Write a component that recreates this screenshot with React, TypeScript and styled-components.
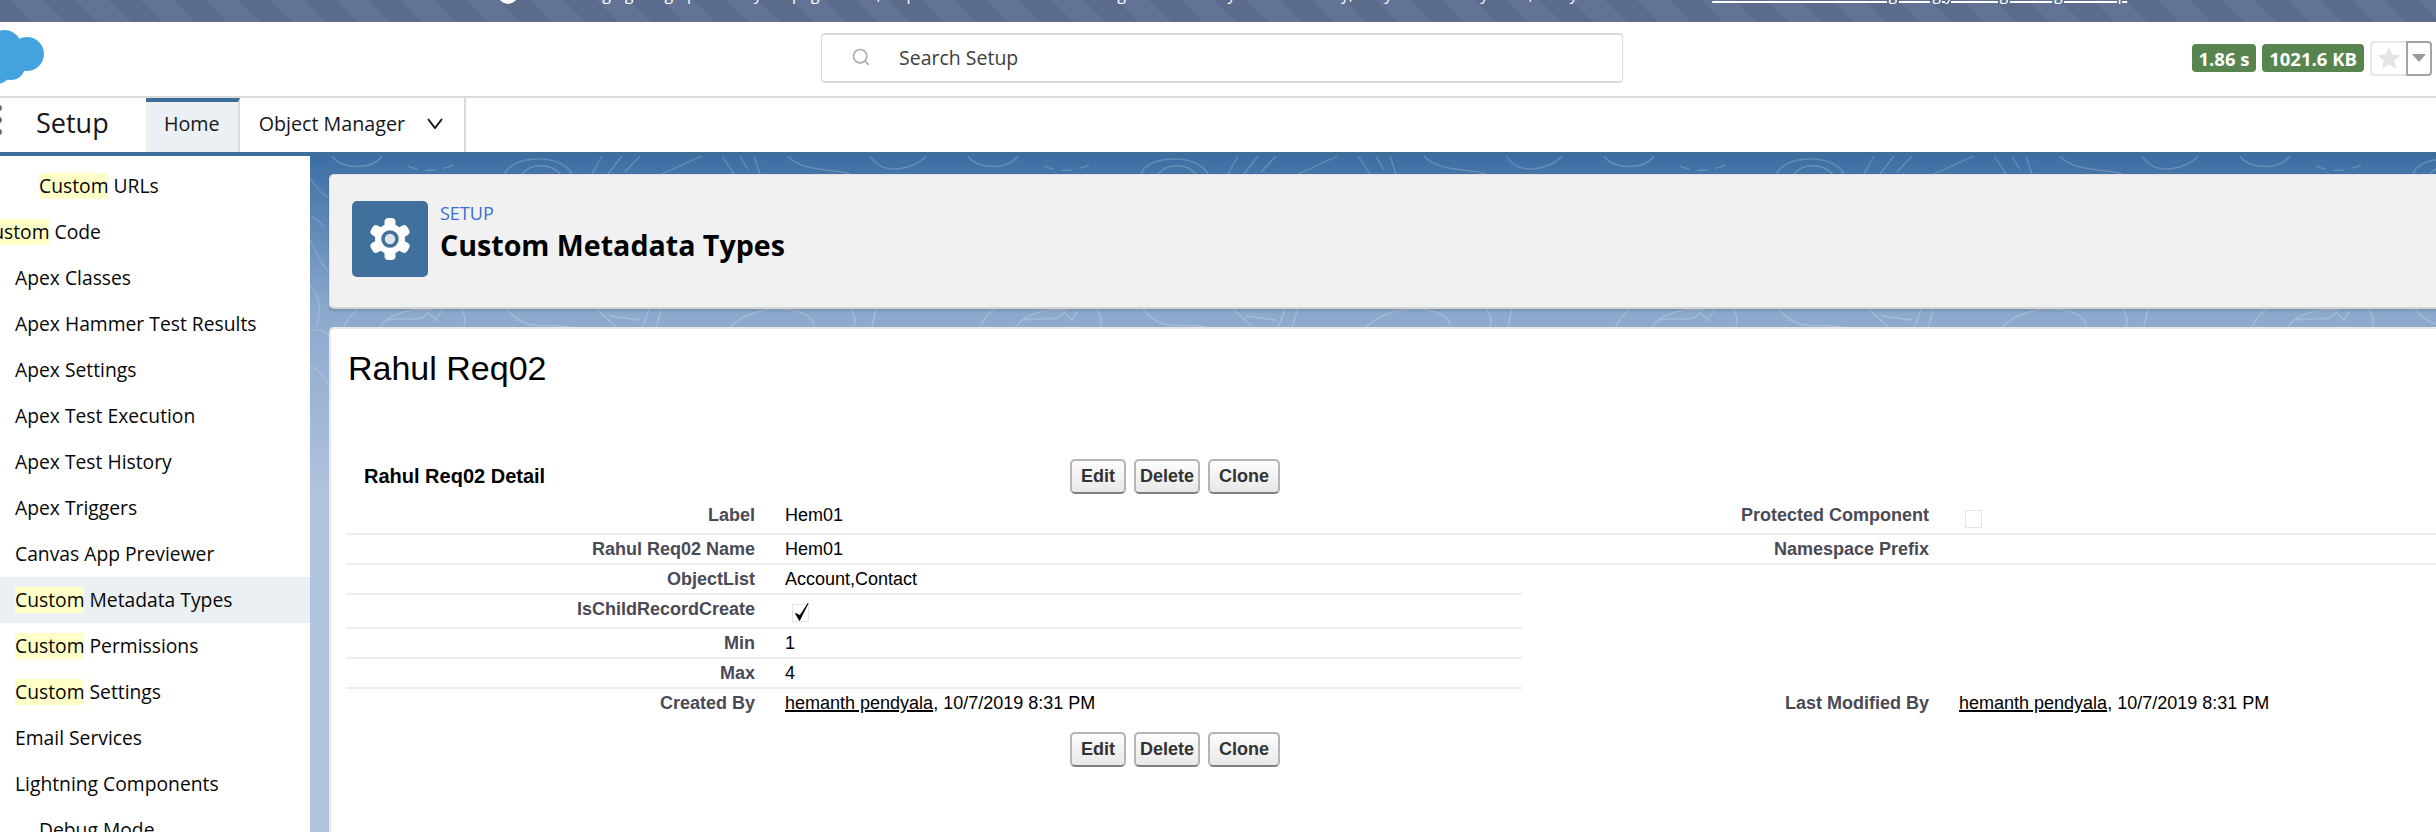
import React from "react";
import styled, { createGlobalStyle } from "styled-components";
import { Search } from "lucide-react";

const sansStack = `"Open Sans", "Liberation Sans", sans-serif`;
const arialStack = `"Liberation Sans", Arial, sans-serif`;

const GlobalStyle = createGlobalStyle`
  html, body {
    margin: 0;
    padding: 0;
    background: #fff;
    overflow: hidden;
  }
  * {
    box-sizing: border-box;
  }
`;

const Page = styled.div`
  width: 2436px;
  height: 832px;
  overflow: hidden;
  display: flex;
  flex-direction: column;
  font-family: ${sansStack};
  color: #080707;
`;

const Banner = styled.div`
  height: 22px;
  flex: none;
  overflow: hidden;
  display: flex;
  align-items: flex-end;
  padding: 0 0 17px 498px;
  background: repeating-linear-gradient(45deg, #5a6b8c 0, #5a6b8c 23px, #627395 23px, #627395 46px);
  color: #fff;
  font-size: 16px;
  line-height: 22px;
  white-space: nowrap;
`;

const BannerDot = styled.span`
  width: 20px;
  height: 20px;
  margin: 0 7px 1px 0;
  border-radius: 50%;
  background: #fff;
  flex: none;
`;

const BannerLink = styled.a`
  margin-left: 102px;
  color: #fff;
  text-decoration: underline;
  text-decoration-thickness: 2px;
`;

const Header = styled.header`
  height: 76px;
  flex: none;
  display: flex;
  align-items: center;
  border-bottom: 2px solid #dddbda;
  background: #fff;
`;

const LogoSlot = styled.div`
  width: 821px;
  height: 74px;
  flex: none;
`;

const SearchBox = styled.div`
  width: 802px;
  height: 50px;
  margin-top: -2px;
  display: flex;
  align-items: center;
  gap: 28px;
  padding-left: 29px;
  padding-bottom: 2px;
  border: 1px solid #dddbda;
  border-top-width: 2px;
  border-bottom-width: 2px;
  border-radius: 4px;
  font-size: 19.5px;
  color: #3e3e3c;
`;

const Limits = styled.div`
  margin-left: auto;
  margin-right: 4px;
  margin-top: -2px;
  display: flex;
  align-items: center;
`;

const Badge = styled.span`
  height: 28px;
  display: flex;
  align-items: center;
  justify-content: center;
  width: ${(p) => p.$width}px;
  margin-right: 6px;
  border-radius: 4px;
  background: #58854f;
  color: #fff;
  font-size: 18.5px;
  font-weight: 700;
`;

const FavButton = styled.div`
  width: 36px;
  height: 35px;
  display: flex;
  align-items: center;
  justify-content: center;
  border: 2px solid #e6e6e6;
  border-right: 0;
  border-radius: 4px 0 0 4px;
`;

const FavMenu = styled.div`
  width: 26px;
  height: 35px;
  display: flex;
  align-items: center;
  justify-content: center;
  border: 2px solid #a3a3a3;
  border-radius: 0 4px 4px 0;
`;

const Caret = styled.span`
  width: 0;
  height: 0;
  border-left: 7px solid transparent;
  border-right: 7px solid transparent;
  border-top: 8px solid #999;
`;

const Nav = styled.nav`
  height: 58px;
  flex: none;
  display: flex;
  background: #fff;
  border-bottom: 4px solid #3e6f9b;
`;

const AppName = styled.div`
  width: 146px;
  flex: none;
  display: flex;
  align-items: center;
  gap: 31px;
  padding-bottom: 6px;
  font-size: 27px;
  color: #16161a;
`;

const LauncherDots = styled.svg`
  width: 5px;
  height: 40px;
  flex: none;
`;

const Tab = styled.div`
  display: flex;
  align-items: center;
  gap: 22px;
  padding: ${(p) => (p.$active ? "0 18px 8px" : "0 21px 4px 19px")};
  border-right: 2px solid #dddbda;
  border-top: ${(p) => (p.$active ? "4px solid #3e6f9b" : "0")};
  background: ${(p) => (p.$active ? "#ebf0f5" : "#fff")};
  font-size: 19.7px;
  color: #16161a;
`;

const Main = styled.main`
  flex: 1;
  min-height: 0;
  display: flex;
`;

const Sidebar = styled.aside`
  width: 310px;
  flex: none;
  padding-top: 7px;
  overflow: hidden;
  background: #fff;
`;

const SideItem = styled.div`
  height: 46px;
  display: flex;
  align-items: center;
  padding-bottom: 2px;
  background: ${(p) => (p.$active ? "#ebf0f5" : "transparent")};
  font-size: 19.3px;
  color: #080707;
  white-space: nowrap;
`;

const SideLabel = styled.span`
  margin-left: ${(p) => p.$indent}px;
`;

const Mark = styled.mark`
  display: inline-block;
  background: #ffffc8;
  color: inherit;
  line-height: 26px;
  margin-right: 5px;
`;

const Content = styled.div`
  position: relative;
  flex: 1;
  min-width: 0;
  overflow: hidden;
  padding: 18px 0 0 19px;
  background: linear-gradient(to bottom, #3c6ea4 0, #8aa8cc 150px, #b0c3de 340px, #b0c3de 100%);
`;

const Topography = styled.svg`
  position: absolute;
  left: 0;
  top: 0;
  width: 100%;
  height: 100%;
`;

const PageHeaderCard = styled.section`
  position: relative;
  width: 2140px;
  height: 135px;
  display: flex;
  align-items: center;
  gap: 12px;
  padding: 0 0 5px 22px;
  background: #f1f1f1;
  border: 1px solid #e2e2e2;
  border-bottom: 2px solid #d4d4d2;
  border-radius: 5px 0 0 5px;
  box-shadow: 0 2px 3px rgba(0, 0, 0, 0.15);
`;

const HeaderIcon = styled.div`
  width: 76px;
  height: 76px;
  flex: none;
  display: flex;
  align-items: center;
  justify-content: center;
  background: #3f719c;
  border-radius: 5px;
`;

const HeaderText = styled.div`
  display: flex;
  flex-direction: column;
  margin-top: -11px;
`;

const Crumb = styled.div`
  font-size: 18px;
  line-height: 23px;
  color: #3a6fd0;
`;

const PageTitle = styled.h1`
  margin: 0;
  font-size: 28.6px;
  line-height: 40px;
  font-weight: 700;
  color: #000;
`;

const BodyCard = styled.section`
  position: relative;
  width: 2140px;
  height: 520px;
  margin-top: 18px;
  padding: 20px 0 0 15px;
  background: #fff;
  border: 2px solid #e8e8e8;
  border-right: 0;
  border-bottom: 0;
  border-radius: 5px 0 0 0;
  font-family: ${arialStack};
`;

const RecordName = styled.h2`
  margin: 0 0 72px 2px;
  font-size: 34px;
  line-height: 38px;
  font-weight: 400;
  color: #000;
`;

const DetailHead = styled.div`
  height: 35px;
  display: flex;
  align-items: center;
  margin-bottom: 7px;
`;

const DetailTitle = styled.h3`
  width: 724px;
  margin: 0;
  padding-left: 18px;
  padding-bottom: 2px;
  font-size: 20px;
  line-height: 24px;
  font-weight: 700;
  color: #000;
`;

const ButtonRow = styled.div`
  display: flex;
  gap: 8px;
`;

const BottomButtons = styled(ButtonRow)`
  margin: 15px 0 0 724px;
`;

const Button = styled.button`
  height: 35px;
  width: ${(p) => p.$width}px;
  padding: 0;
  border: 2px solid #b5b5b5;
  border-bottom-color: #7f7f7f;
  border-radius: 5px;
  background: linear-gradient(to bottom, #fdfdfd, #e8e8e8);
  font-family: ${arialStack};
  font-size: 18px;
  font-weight: 700;
  color: #333;
`;

const Row = styled.div`
  display: flex;
`;

const Pair = styled.div`
  display: grid;
  grid-template-columns: ${(p) => (p.$right ? "407px 1fr" : "409px 1fr")};
  column-gap: 30px;
  flex: ${(p) => (p.$right ? "1" : "none")};
  width: ${(p) => (p.$right ? "auto" : "1176px")};
  padding: ${(p) => (p.$tall ? "4px 0 8px" : "4px 0 4px")};
  border-bottom: ${(p) => (p.$line ? "2px solid #eeeeee" : "0")};
  min-height: ${(p) => (p.$line ? (p.$tall ? 34 : 30) : 28)}px;
  font-size: 18px;
  line-height: 20px;
`;

const Label = styled.div`
  text-align: right;
  font-weight: 700;
  color: #4a4a56;
`;

const Value = styled.div`
  color: #000;
`;

const UserLink = styled.a`
  color: #000;
  text-decoration: underline;
  text-decoration-thickness: 2px;
`;

const CheckImage = styled.svg`
  display: block;
  width: 18px;
  height: 20px;
  margin: 4px 0 -6px ${(p) => p.$offset}px;
`;

const GearIcon = () => (
  <svg width="42" height="44" viewBox="-21 -22 42 44">
    <circle r="15" fill="#fff" />
    {[0, 60, 120, 180, 240, 300].map((deg) => (
      <rect key={deg} x="-5.5" y="-21" width="11" height="12" rx="4" fill="#fff" transform={`rotate(${deg})`} />
    ))}
    <circle r="7" fill="#dbe5ee" stroke="#3f719c" strokeWidth="3.5" />
  </svg>
);

const CloudLogo = () => (
  <svg width="46" height="64" viewBox="0 0 46 64" fill="#44a2df">
    <circle cx="4" cy="26" r="18" />
    <circle cx="27" cy="32" r="17" />
    <circle cx="11" cy="44" r="14" />
    <circle cx="-3" cy="48" r="14" />
  </svg>
);

const StarIcon = () => (
  <svg width="24" height="24" viewBox="0 0 24 24" fill="#e4e4e4">
    <path d="M12 1 L15.2 8.6 L23.4 9.3 L17.2 14.6 L19.1 22.7 L12 18.4 L4.9 22.7 L6.8 14.6 L0.6 9.3 L8.8 8.6 Z" />
  </svg>
);

const TabChevron = () => (
  <svg width="16" height="11" viewBox="0 0 16 11" fill="none" stroke="#16161a" strokeWidth="2">
    <path d="M1 1 L8 10 L15 1" />
  </svg>
);

const CheckBox = ({ checked, offset }: { checked?: boolean; offset: number }) => (
  <CheckImage $offset={offset} viewBox="0 0 18 20">
    <rect x="0.5" y="1.5" width="16" height="17" fill="none" stroke="#c9c9c9" strokeDasharray="1 1" />
    {checked && <path d="M3.5 10.5 L7.5 17.5 L16 0.5 L8 12.5 Z" fill="#000" stroke="#000" strokeWidth="0.9" />}
  </CheckImage>
);

// the contour lines only show in the gaps between the cards
const Contours = () => (
  <Topography>
    <defs>
      <pattern id="topStrip" width="636" height="18" patternUnits="userSpaceOnUse">
        <g fill="none" stroke="#fff" strokeOpacity="0.2" strokeWidth="1.3">
          <path d="M22 0 C32 14 62 14 72 0" />
          <path d="M98 10 C115 18 135 14 150 6" strokeDasharray="10 8" />
          <path d="M195 18 C200 0 250 -4 262 18" />
          <path d="M212 18 C220 8 240 6 250 18" />
          <path d="M282 18 L292 0 M298 18 L312 0 M315 16 L330 0" />
          <path d="M352 18 C366 12 378 6 392 0" />
          <path d="M412 0 L424 18 M430 0 L438 14 M444 0 L450 18" />
          <path d="M478 0 C492 16 520 12 540 18" />
          <path d="M560 0 C574 22 606 12 616 0" />
        </g>
      </pattern>
      <pattern id="midStrip" y="152" width="636" height="19" patternUnits="userSpaceOnUse">
        <g fill="none" stroke="#fff" strokeOpacity="0.22" strokeWidth="1.3">
          <path d="M34 19 C38 10 44 4 50 0" />
          <path d="M70 19 C80 4 104 0 122 2 M76 12 C96 8 112 16 118 4 L126 12 L132 2" />
          <path d="M150 0 C156 8 156 14 154 19" />
          <path d="M196 0 C216 26 236 14 260 19" />
          <path d="M286 0 L306 19 M300 8 L330 12 M340 0 L332 19 M352 0 L346 19" />
          <path d="M420 19 C440 0 470 -2 490 4 C500 8 504 12 504 19" />
          <path d="M540 0 C546 10 546 14 544 19 M566 0 L562 19" />
        </g>
      </pattern>
    </defs>
    <rect x="0" y="0" width="100%" height="18" fill="url(#topStrip)" />
    <rect x="0" y="152" width="100%" height="19" fill="url(#midStrip)" />
    <g fill="none" stroke="#fff" strokeOpacity="0.18" strokeWidth="1.3">
      <path d="M0 22 C8 34 14 40 19 42" />
      <path d="M2 60 L14 70 M0 84 C8 100 12 110 19 116" />
      <path d="M0 130 C10 140 12 158 6 170" />
      <path d="M0 175 C10 172 16 176 19 180 M0 210 C10 214 16 222 19 230" />
    </g>
  </Topography>
);

const sideItems = [
  { text: "URLs", mark: "Custom", indent: 39 },
  { text: "Code", mark: "Custom", indent: -20 },
  { text: "Apex Classes", indent: 15 },
  { text: "Apex Hammer Test Results", indent: 15 },
  { text: "Apex Settings", indent: 15 },
  { text: "Apex Test Execution", indent: 15 },
  { text: "Apex Test History", indent: 15 },
  { text: "Apex Triggers", indent: 15 },
  { text: "Canvas App Previewer", indent: 15 },
  { text: "Metadata Types", mark: "Custom", indent: 15, active: true },
  { text: "Permissions", mark: "Custom", indent: 15 },
  { text: "Settings", mark: "Custom", indent: 15 },
  { text: "Email Services", indent: 15 },
  { text: "Lightning Components", indent: 15 },
  { text: "Debug Mode", indent: 39 },
];

const Actions = () => (
  <>
    <Button $width={56}>Edit</Button>
    <Button $width={66}>Delete</Button>
    <Button $width={72}>Clone</Button>
  </>
);

const modified = (
  <>
    <UserLink>hemanth pendyala</UserLink>, 10/7/2019 8:31 PM
  </>
);

function App() {
  return (
    <Page>
      <GlobalStyle />
      <Banner>
        <BannerDot />
        <span>We're bringing a big update to your pages soon, so please review all of the changes now and try them out early, okay? Thanks to you all, everyone.</span>
        <BannerLink>Find out more about migrating your org settings in Help</BannerLink>
      </Banner>
      <Header>
        <LogoSlot>
          <CloudLogo />
        </LogoSlot>
        <SearchBox>
          <Search size={20} color="#b0adab" strokeWidth={2} />
          <span>Search Setup</span>
        </SearchBox>
        <Limits>
          <Badge $width={64}>1.86 s</Badge>
          <Badge $width={102}>1021.6 KB</Badge>
          <FavButton>
            <StarIcon />
          </FavButton>
          <FavMenu>
            <Caret />
          </FavMenu>
        </Limits>
      </Header>
      <Nav>
        <AppName>
          <LauncherDots viewBox="0 0 5 40">
            <circle cx="-1" cy="6" r="3" fill="#706e6b" />
            <circle cx="-1" cy="18" r="3" fill="#706e6b" />
            <circle cx="-1" cy="30" r="3" fill="#706e6b" />
          </LauncherDots>
          Setup
        </AppName>
        <Tab $active>Home</Tab>
        <Tab>
          Object Manager
          <TabChevron />
        </Tab>
      </Nav>
      <Main>
        <Sidebar>
          {sideItems.map((item) => (
            <SideItem key={item.text + item.indent} $active={item.active}>
              <SideLabel $indent={item.indent}>
                {item.mark && <Mark>{item.mark}</Mark>}
                {item.text}
              </SideLabel>
            </SideItem>
          ))}
        </Sidebar>
        <Content>
          <Contours />
          <PageHeaderCard>
            <HeaderIcon>
              <GearIcon />
            </HeaderIcon>
            <HeaderText>
              <Crumb>SETUP</Crumb>
              <PageTitle>Custom Metadata Types</PageTitle>
            </HeaderText>
          </PageHeaderCard>
          <BodyCard>
            <RecordName>Rahul Req02</RecordName>
            <DetailHead>
              <DetailTitle>Rahul Req02 Detail</DetailTitle>
              <ButtonRow>
                <Actions />
              </ButtonRow>
            </DetailHead>
            <Row>
              <Pair $line $tall>
                <Label>Label</Label>
                <Value>Hem01</Value>
              </Pair>
              <Pair $right $line $tall>
                <Label>Protected Component</Label>
                <Value>
                  <CheckBox offset={6} />
                </Value>
              </Pair>
            </Row>
            <Row>
              <Pair $line>
                <Label>Rahul Req02 Name</Label>
                <Value>Hem01</Value>
              </Pair>
              <Pair $right $line>
                <Label>Namespace Prefix</Label>
                <Value />
              </Pair>
            </Row>
            <Row>
              <Pair $line>
                <Label>ObjectList</Label>
                <Value>Account,Contact</Value>
              </Pair>
            </Row>
            <Row>
              <Pair $line $tall>
                <Label>IsChildRecordCreate</Label>
                <Value>
                  <CheckBox checked offset={7} />
                </Value>
              </Pair>
            </Row>
            <Row>
              <Pair $line>
                <Label>Min</Label>
                <Value>1</Value>
              </Pair>
            </Row>
            <Row>
              <Pair $line>
                <Label>Max</Label>
                <Value>4</Value>
              </Pair>
            </Row>
            <Row>
              <Pair>
                <Label>Created By</Label>
                <Value>{modified}</Value>
              </Pair>
              <Pair $right>
                <Label>Last Modified By</Label>
                <Value>{modified}</Value>
              </Pair>
            </Row>
            <BottomButtons>
              <Actions />
            </BottomButtons>
          </BodyCard>
        </Content>
      </Main>
    </Page>
  );
}

export default App;
